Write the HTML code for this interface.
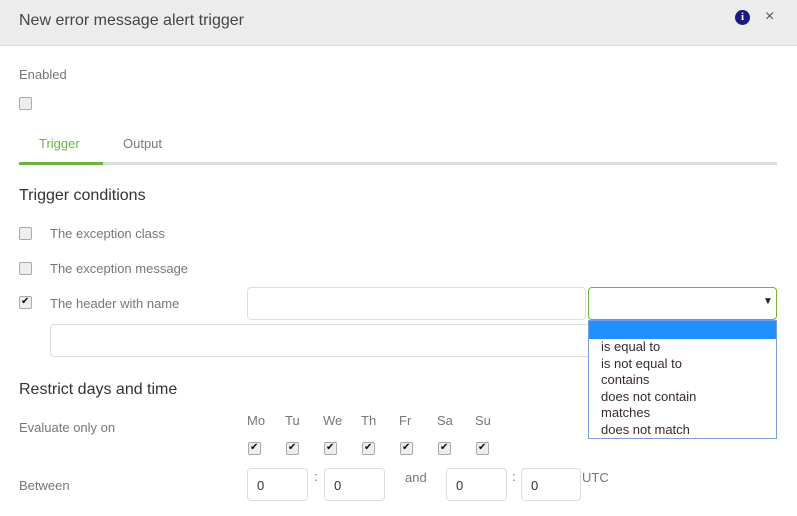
<!DOCTYPE html>
<html><head><style>
body{margin:0;width:797px;height:516px;overflow:hidden;background:#fff;font-family:"Liberation Sans",sans-serif;position:relative}
.a{position:absolute;white-space:nowrap}
.hdr{left:0;top:0;width:797px;height:45px;background:#ececec;border-bottom:1px solid #dcdcdc}
.lbl{font-size:13px;color:#777}
.h{font-size:16px;color:#333}
.cb{position:absolute;width:11px;height:11px;border:1px solid #aaa;border-radius:2px;background:#eee}
.cb.c::after{content:"✔";position:absolute;left:1px;top:-1px;font-size:10px;line-height:12px;color:#111}
.in{position:absolute;border:1px solid #ddd;border-radius:4px;box-sizing:border-box;background:#fff;font-size:13px;color:#333;padding:9px 0 0 9px}
.opt{font-size:13px;color:#3a2b2b;line-height:16.6px;padding-left:12px}
</style></head><body>
<div class="a hdr"></div>
<div class="a" style="left:19px;top:12px;font-size:16px;color:#444">New error message alert trigger</div>
<div class="a" style="left:735px;top:10px;width:15px;height:15px;border-radius:50%;background:#1a1a80;color:#fff;font:bold 11px 'Liberation Serif',serif;text-align:center;line-height:15px">i</div>
<div class="a" style="left:765px;top:8px;font-size:16px;color:#555">×</div>
<div class="a lbl" style="left:19px;top:67px">Enabled</div>
<div class="cb" style="left:19px;top:97px"></div>
<div class="a" style="left:39px;top:136px;font-size:13px;color:#6db33f">Trigger</div>
<div class="a lbl" style="left:123px;top:136px">Output</div>
<div class="a" style="left:19px;top:162px;width:758px;height:3px;background:#ddd"></div>
<div class="a" style="left:19px;top:162px;width:84px;height:3px;background:#6db33f"></div>
<div class="a h" style="left:19px;top:187px">Trigger conditions</div>
<div class="cb" style="left:19px;top:227px"></div>
<div class="a lbl" style="left:50px;top:226px">The exception class</div>
<div class="cb" style="left:19px;top:262px"></div>
<div class="a lbl" style="left:50px;top:261px">The exception message</div>
<div class="cb c" style="left:19px;top:296px"></div>
<div class="a lbl" style="left:50px;top:296px">The header with name</div>
<div class="in" style="left:247px;top:287px;width:339px;height:33px"></div>
<div class="in" style="left:50px;top:324px;width:727px;height:33px"></div>
<div class="in" style="left:588px;top:287px;width:189px;height:33px;border-color:#6db33f"></div>
<div class="a" style="left:763px;top:296px;font-size:10px;color:#222">▼</div>
<div class="a" style="left:588px;top:320px;width:187px;height:117px;border:1px solid #7a9fd8;background:#fff">
<div style="height:18px;background:#1e90ff"></div>
<div class="opt">is equal to</div><div class="opt">is not equal to</div><div class="opt">contains</div><div class="opt">does not contain</div><div class="opt">matches</div><div class="opt">does not match</div>
</div>
<div class="a h" style="left:19px;top:381px">Restrict days and time</div>
<div class="a lbl" style="left:19px;top:420px">Evaluate only on</div>
<div class="a lbl" style="left:247px;top:413px">Mo</div><div class="a lbl" style="left:285px;top:413px">Tu</div><div class="a lbl" style="left:323px;top:413px">We</div><div class="a lbl" style="left:361px;top:413px">Th</div><div class="a lbl" style="left:399px;top:413px">Fr</div><div class="a lbl" style="left:437px;top:413px">Sa</div><div class="a lbl" style="left:475px;top:413px">Su</div>
<div class="cb c" style="left:248px;top:442px"></div><div class="cb c" style="left:286px;top:442px"></div><div class="cb c" style="left:324px;top:442px"></div><div class="cb c" style="left:362px;top:442px"></div><div class="cb c" style="left:400px;top:442px"></div><div class="cb c" style="left:438px;top:442px"></div><div class="cb c" style="left:476px;top:442px"></div>
<div class="a lbl" style="left:19px;top:478px">Between</div>
<div class="in" style="left:247px;top:468px;width:61px;height:33px">0</div>
<div class="a lbl" style="left:314px;top:469px">:</div>
<div class="in" style="left:324px;top:468px;width:61px;height:33px">0</div>
<div class="a lbl" style="left:405px;top:470px">and</div>
<div class="in" style="left:446px;top:468px;width:61px;height:33px">0</div>
<div class="a lbl" style="left:512px;top:469px">:</div>
<div class="in" style="left:521px;top:468px;width:60px;height:33px">0</div>
<div class="a lbl" style="left:582px;top:470px">UTC</div>
</body></html>
